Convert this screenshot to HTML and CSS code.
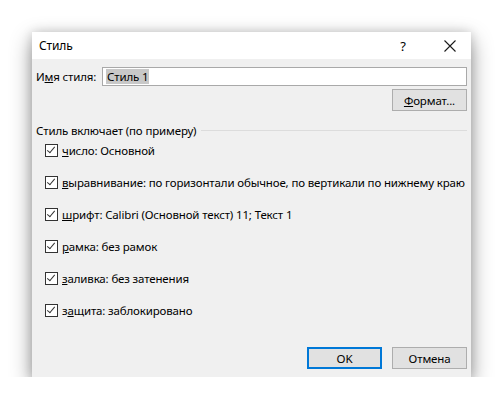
FILE: index.html
```html
<!DOCTYPE html>
<html lang="ru">
<head>
<meta charset="utf-8">
<title>Стиль</title>
<link rel="stylesheet" href="styles.css">
</head>
<body>
<div class="dialog">
  <div class="titlebar">
    <span class="title">Стиль</span>
    <span class="help">?</span>
    <span class="close">
      <svg width="12" height="12" viewBox="0 0 12 12"><path d="M0.5 0.5 L11.5 11.5 M11.5 0.5 L0.5 11.5" stroke="#1a1a1a" stroke-width="1.1" fill="none"/></svg>
    </span>
  </div>
  <div class="body">
    <div class="name-row">
      <label class="name-label">И<u>м</u>я стиля:</label>
      <div class="input"><span class="sel">Стиль 1</span></div>
    </div>
    <div class="format-row">
      <button class="btn"><u>Ф</u>ормат...</button>
    </div>
    <div class="group-head">
      <span>Стиль включает (по примеру)</span>
      <span class="rule"></span>
    </div>
    <ul class="checks">
      <li><span class="box"></span><span><u>ч</u>исло: Основной</span></li>
      <li><span class="box"></span><span><u>в</u>ыравнивание: по горизонтали обычное, по вертикали по нижнему краю</span></li>
      <li><span class="box"></span><span><u>ш</u>рифт: Calibri (Основной текст) 11; Текст 1</span></li>
      <li><span class="box"></span><span><u>р</u>амка: без рамок</span></li>
      <li><span class="box"></span><span><u>з</u>аливка: без затенения</span></li>
      <li><span class="box"></span><span>з<u>а</u>щита: заблокировано</span></li>
    </ul>
    <div class="actions">
      <button class="btn default">OK</button>
      <button class="btn">Отмена</button>
    </div>
  </div>
</div>
</body>
</html>
```
FILE: styles.css
```css
html, body {
  margin: 0;
  background: #ffffff;
}

body {
  padding: 32px 0 0 32px;
  font-family: "Noto Sans", "Open Sans", sans-serif;
  font-size: 11.5px;
  letter-spacing: -0.15px;
  color: #000;
}

.dialog {
  width: 439px;
  height: 345px;
  background: #f0f0f0;
  box-shadow: 0 8px 20px rgba(0, 0, 0, 0.42), 0 0 10px rgba(0, 0, 0, 0.14);
  display: flex;
  flex-direction: column;
}

.titlebar {
  height: 27px;
  background: #ffffff;
  display: flex;
  align-items: center;
  padding: 0 15px 0 7px;
}

.title {
  flex: 1;
  font-size: 12px;
  line-height: 16px;
  padding-top: 1px;
}

.help {
  width: 12px;
  text-align: center;
  font-size: 13px;
  margin-right: 35px;
  padding-top: 1px;
}

.close {
  display: flex;
  width: 12px;
  height: 12px;
}

.body {
  flex: 1;
  padding: 8px 4px 8px 4px;
  display: flex;
  flex-direction: column;
}

.name-row {
  display: flex;
  align-items: center;
  height: 19px;
}

.name-label {
  width: 66px;
  flex: none;
}

.input {
  flex: 1;
  height: 17px;
  border: 1px solid #a9a9a9;
  background: #fff;
  display: flex;
  align-items: center;
  padding-left: 3px;
}

.sel {
  background: #c8c8c8;
  line-height: 15px;
  padding: 0 1px;
}

.format-row {
  display: flex;
  justify-content: flex-end;
  margin-top: 3px;
}

.btn {
  width: 75px;
  height: 22px;
  border: 1px solid #adadad;
  background: #e1e1e1;
  font: inherit;
  letter-spacing: inherit;
  color: #000;
  padding: 0;
  box-sizing: border-box;
}

.btn.default {
  border: 2px solid #0078d7;
}

.group-head {
  display: flex;
  align-items: center;
  margin-top: 11px;
  height: 16px;
}

.group-head .rule {
  flex: 1;
  height: 1px;
  background: #dcdcdc;
  margin-left: 5px;
}

.checks {
  list-style: none;
  margin: 4px 0 0 9px;
  padding: 0;
  display: flex;
  flex-direction: column;
  gap: 16px;
}

.checks li {
  display: flex;
  align-items: center;
  height: 16px;
  gap: 4px;
  white-space: nowrap;
}

.box {
  width: 11px;
  height: 11px;
  border: 1px solid #333;
  background: #fff;
  position: relative;
  flex: none;
}

.box::after {
  content: "";
  position: absolute;
  left: 3px;
  top: 0px;
  width: 3px;
  height: 7px;
  border-right: 1px solid #333;
  border-bottom: 1px solid #333;
  transform: rotate(40deg);
  transform-origin: center;
}

.actions {
  margin-top: auto;
  display: flex;
  justify-content: flex-end;
  gap: 10px;
}
```
